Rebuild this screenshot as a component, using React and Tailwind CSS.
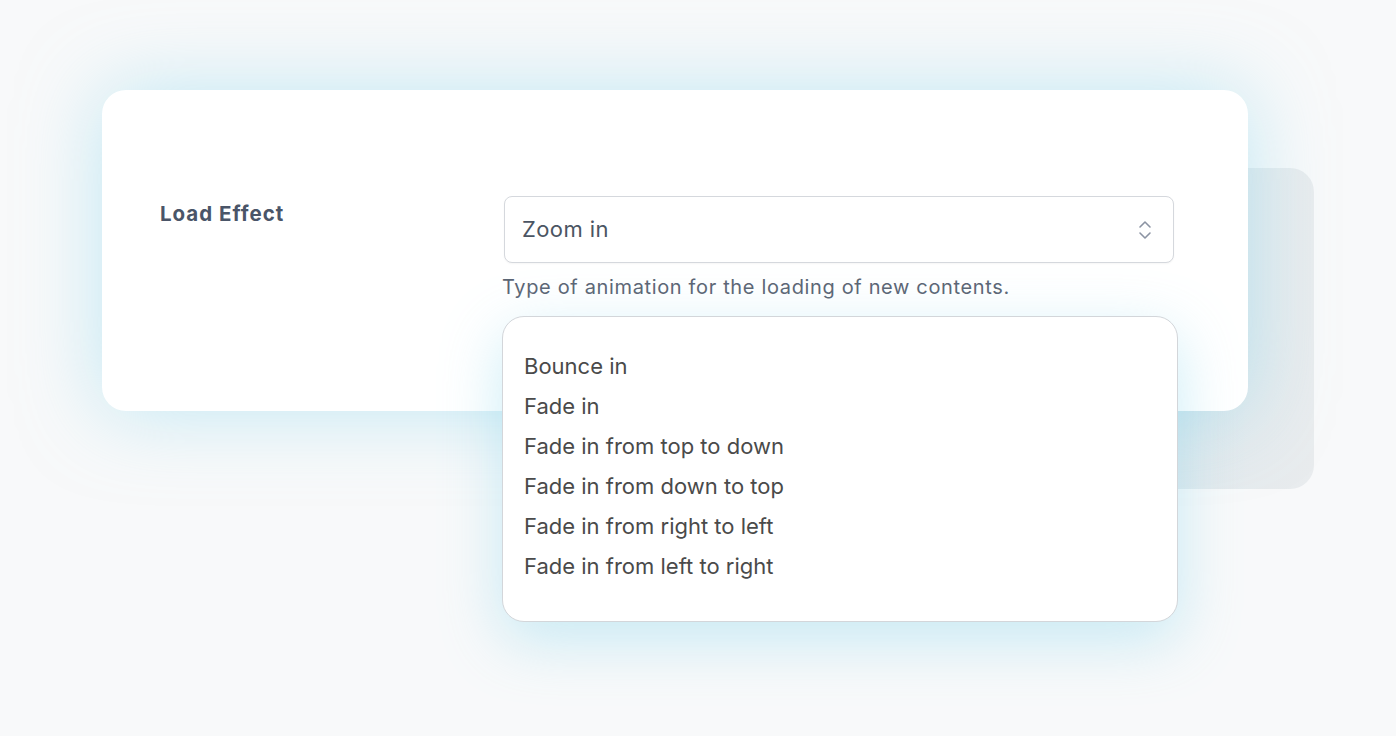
import React from "react";

const items = [
  "Bounce in",
  "Fade in",
  "Fade in from top to down",
  "Fade in from down to top",
  "Fade in from right to left",
  "Fade in from left to right",
];

function UpDown() {
  return (
    <svg width="16" height="26" viewBox="0 0 16 26" fill="none" stroke="#8b93a3" strokeWidth="1.6" strokeLinecap="round" strokeLinejoin="round">
      <path d="M3 10 L8 5 L13 10" />
      <path d="M3 16 L8 21 L13 16" />
    </svg>
  );
}

export default function App() {
  return (
    <div
      className="relative w-full h-[736px] overflow-hidden bg-[#f8f9fa]"
      style={{ fontFamily: "Inter, 'Noto Sans', sans-serif" }}
    >
      {/* grey panel behind the card */}
      <div className="absolute left-[880px] top-[168px] w-[434px] h-[321px] rounded-[24px] bg-gradient-to-r from-[#d4e5ee] via-[#dfe8ed] to-[#e9ecee]" />

      <div className="relative pt-[90px] pl-[102px]">
        <div className="relative w-[1146px] h-[321px] rounded-[24px] bg-white shadow-[0_0_80px_rgba(140,215,238,0.5)]">
          <div className="flex pt-[106px] pl-[58px]">
            <div className="w-[342px] pt-[8px] text-[20.5px] font-bold tracking-[1px] text-[#4a5568] leading-none">
              Load Effect
            </div>
            <div className="relative w-[672px]">
              <div className="ml-[2px] w-[670px] h-[67px] flex items-center justify-between rounded-[8px] border border-[#d5d8dd] bg-white pl-[17px] pr-[20px] shadow-[0_1px_2px_rgba(0,0,0,0.04)]">
                <span className="text-[22px] tracking-[0.4px] text-[#4b5563]">Zoom in</span>
                <UpDown />
              </div>
              <div className="mt-[11px] text-[20px] tracking-[0.65px] text-[#5c6574] leading-[26px]">
                Type of animation for the loading of new contents.
              </div>
            </div>
          </div>
        </div>

        {/* dropdown list */}
        <div className="absolute left-[502px] top-[316px] w-[676px] h-[306px] rounded-[22px] border-[1.5px] border-[#d3d6da] bg-white pt-[29px] pl-[21px] shadow-[0_18px_60px_rgba(140,215,238,0.45)]">
          {items.map((t) => (
            <div key={t} className="h-[40px] leading-[40px] text-[22px] text-[#4a4a4a]">
              {t}
            </div>
          ))}
        </div>
      </div>
    </div>
  );
}
